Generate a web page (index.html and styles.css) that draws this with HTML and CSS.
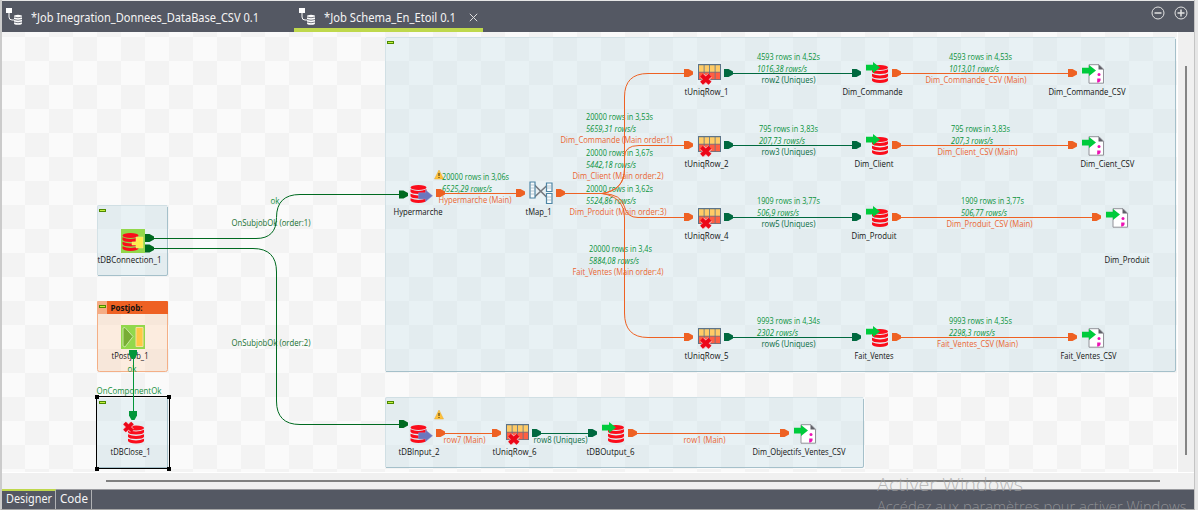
FILE: index.html
```html
<!DOCTYPE html>
<html lang="fr">
<head>
<meta charset="utf-8">
<title>Job Schema_En_Etoil 0.1</title>
<link rel="stylesheet" href="styles.css">
</head>
<body>
<div class="window">
  <header class="tabs">
    <div class="tab first">
      <svg class="job-icon" viewBox="0 0 18 17"><use href="#job"/></svg>
      <svg class="tab-text" width="240" height="24"><text x="0" y="18" textLength="228">*Job Inegration_Donnees_DataBase_CSV 0.1</text></svg>
    </div>
    <div class="tab active">
      <svg class="job-icon" viewBox="0 0 18 17"><use href="#job"/></svg>
      <svg class="tab-text" width="136" height="24"><text x="0" y="18" textLength="132">*Job Schema_En_Etoil 0.1</text></svg>
      <svg class="close" viewBox="0 0 9 9"><path d="M.8.8l7.4 7.4M8.2.8L.8 8.2"/></svg>
    </div>
    <div class="window-buttons">
      <svg viewBox="0 0 14 14"><circle cx="7" cy="7" r="6"/><path d="M3.5 7h7"/></svg>
      <svg viewBox="0 0 14 14"><circle cx="7" cy="7" r="6"/><path d="M3.5 7h7M7 3.5v7"/></svg>
    </div>
  </header>

  <main class="editor">
    <svg class="diagram" width="1176" height="440" viewBox="2 32 1176 440">
      <defs>
        <pattern id="checks" x="1" y="37" width="48" height="48" patternUnits="userSpaceOnUse">
          <path fill="#fafafa" d="M0 0h48v48H0z"/><path fill="#f3f3f3" d="M24 0h24v24H24zM0 24h24v24H0z"/>
        </pattern>
        <g id="job"><path fill="#fff" d="M0 0h6v5H0zM8 8.2q0-1.500 4-1.500t4 1.500v7q0 1.500-4 1.500t-4-1.500z"/><path fill="none" stroke="#fff" d="M3 5v4q0 3 3 3h2"/><path fill="none" stroke="#545863" stroke-width=".8" d="M8 9q4 1.500 8 0M8 11.500q4 1.500 8 0M8 14q4 1.500 8 0"/></g>
        <path id="plug" d="M0-4h4.500l4.500 2.500v3L4.500 4H0z"/>
        <g id="fold"><path fill="#4d8a00" d="M0 0h7v3H0z"/><path fill="#c3f03c" d="M1 1h5v1H1z"/></g>
        <g id="db" fill="#fb0d1b"><ellipse cx="8" cy="2.500" rx="8" ry="2.500"/><path d="M0 4.300q8 3.400 16 0v2.500q-1 2.200-8 2.200T0 6.800zM0 8.800q8 3.400 16 0v2.500q-1 2.200-8 2.200T0 11.300zM0 13.300q8 3.400 16 0v2.300q-1 2.400-8 2.400T0 15.600z"/></g>
        <path id="go" fill="#00cb3c" d="M0 2.700h7V0l7 5.500L7 11V8.500H0z"/>
        <g id="input"><use href="#db" y="1"/><path fill="#6b77bd" stroke="#8b93c8" stroke-width=".5" d="M8 8.800h7V6l7 5.800-7 5.700V15H8z"/></g>
        <g id="output"><use href="#db" x="6.500" y="3"/><use href="#go" x=".5" y="0"/></g>
        <g id="uniq"><path fill="#5d7488" d="M0 1h23v16H0z"/><path fill="#ffcb66" d="M1 2.200h4.700v6.500H1zM6.500 2.200h4.700v6.500H6.500zM12 2.200h4.700v6.500H12zM17.500 2.200H22v6.500h-4.500z"/><path fill="#ff5f42" d="M1 9.500h4.700v6.700H1zM6.500 9.500h4.700v6.700H6.500zM12 9.500h4.700v6.700H12zM17.500 9.500H22v6.700h-4.500z"/><path stroke="#f2b2b4" stroke-width="5.500" d="M4 12.500l8 7.500m0-7.500L4 20"/><path stroke="#ec0718" stroke-width="4" d="M3.500 12.300l8.500 7.900m0-7.900l-8.500 7.900"/></g>
        <g id="file"><path fill="#fff" stroke="#929299" d="M7 .7h10l4.500 4.500v14H7z"/><path fill="#606068" d="M16.500.5l5 5h-5z"/><circle cx="17" cy="10.500" r="1.500" fill="#ed12b5"/><path fill="none" stroke="#ed12b5" stroke-width="2" d="M15.200 15.400h2.400q.2 1.800-2.400 2.300"/><use href="#go" y="1" x="0"/></g>
        <g id="warn"><path fill="#ffc13b" stroke="#e6a92c" stroke-width=".5" d="M4.500 0L9 9H0z"/><path stroke="#69501c" stroke-width="1.300" d="M4.500 3v3M4.500 7v1"/></g>
        <g id="tmap"><path fill="none" stroke="#777b80" stroke-width="1.700" d="M5 4l13 13M5 16L18 4"/><g fill="#f7fbfd" stroke="#4c84a3" stroke-width="1.200"><path d="M.5 1h5v16h-5zM17 2h5.500v8.500H17zM17 12.500h5.500v10H17z"/><path fill="none" stroke="#8ba6b5" stroke-width=".6" d="M.5 4h5m-5 3h5m-5 3h5m-5 3h5M17 5h5m-5 2h5m-5 9h5m-5 3h5"/></g></g>
      </defs>

      <rect x="2" y="32" width="1175" height="440" fill="url(#checks)"/>

      <g class="subjob">
        <rect x="385" y="37" width="791" height="335" rx="2"/>
        <rect x="385" y="397" width="479" height="71" rx="2"/>
        <rect x="97" y="205" width="71" height="71" rx="2"/>
        <rect x="97" y="398" width="71" height="70" rx="1"/>
      </g>
      <path class="subjob-edge" d="M1175.500 39V370q0 1.500-1.500 1.500H386M863.500 399v67q0 1.500-1.500 1.500H386M167.500 207v67q0 1.500-1.500 1.500H98M167.500 399v68.500H98"/>
      <path class="subjob-edge faint" d="M385.500 371V39q0-1.500 1.500-1.500h788M385.500 467v-68q0-1.500 1.500-1.500h476M97.500 275v-68q0-1.500 1.500-1.500h68"/>
      <rect class="postjob" x="97.500" y="301.500" width="70" height="70" rx="2"/>
      <path fill="#ee6123" d="M107 301h60q1 0 1 1v12h-61z"/><path fill="#f5ac84" d="M97 302q0-1 1-1h9v13H97z"/>
      <use href="#fold" x="387" y="41"/><use href="#fold" x="387" y="401"/><use href="#fold" x="99" y="209"/><use href="#fold" x="99" y="305"/><use href="#fold" x="99" y="401"/>
      <rect class="selection" x="96.500" y="396.500" width="73" height="72"/>
      <path d="M95 395h4v4h-4zM167 395h4v4h-4zM95 467h4v4h-4zM167 467h4v4h-4z"/>

      <!-- component icons -->
      <g>
        <rect x="121" y="229" width="24" height="24" fill="#92d84b"/><use href="#db" x="122.500" y="233"/><path fill="#ffed4b" stroke="#ffe792" stroke-width=".5" d="M136 237h7v11h-7v-3h-4v-3h4z"/>
        <rect x="121" y="325" width="24" height="24" fill="#92d84b"/><path fill="#79ad36" stroke="#c7e8a0" d="M123 328l2-.5 8 9-8 10.500-2-1z"/><path fill="#ffc844" stroke="#f5e0a0" d="M136 327.500h7v19h-7z"/>
        <use href="#db" x="128" y="425.500"/><path stroke="#f7bdc0" stroke-width="5" d="M125 423.500l7 7m0-7l-7 7"/><path stroke="#ec0718" stroke-width="3.800" d="M124.500 423l8 8m0-8l-8 8"/>
        <use href="#input" x="410.500" y="184"/><use href="#input" x="410.500" y="424"/>
        <use href="#warn" x="434.500" y="170"/><use href="#warn" x="434.500" y="410"/>
        <use href="#tmap" x="529.500" y="181"/>
        <use href="#uniq" x="698" y="63"/><use href="#uniq" x="698" y="135"/><use href="#uniq" x="698" y="207"/><use href="#uniq" x="698" y="327"/><use href="#uniq" x="506" y="423"/>
        <use href="#output" x="865.500" y="62"/><use href="#output" x="865.500" y="134"/><use href="#output" x="865.500" y="206"/><use href="#output" x="865.500" y="326"/><use href="#output" x="601.500" y="422"/>
        <use href="#file" x="1082" y="64"/><use href="#file" x="1082" y="136"/><use href="#file" x="1106" y="208"/><use href="#file" x="1082" y="328"/><use href="#file" x="794" y="424"/>
      </g>

      <!-- labels -->
      <g class="name">
        <text x="97.500" y="262" textLength="64">tDBConnection_1</text>
        <text x="111.500" y="358" textLength="37">tPostjob_1</text>
        <text x="110.500" y="454" textLength="40">tDBClose_1</text>
        <text class="bold" x="110.500" y="310" textLength="32">Postjob:</text>
        <text x="393.500" y="214" textLength="49">Hypermarche</text>
        <text x="525.500" y="214" textLength="26">tMap_1</text>
        <text x="684.500" y="94" textLength="44">tUniqRow_1</text>
        <text x="684.500" y="166" textLength="44">tUniqRow_2</text>
        <text x="684.500" y="238" textLength="44">tUniqRow_4</text>
        <text x="684.500" y="358" textLength="44">tUniqRow_5</text>
        <text x="842.500" y="94" textLength="60">Dim_Commande</text>
        <text x="854.500" y="166" textLength="39">Dim_Client</text>
        <text x="851.500" y="238" textLength="45">Dim_Produit</text>
        <text x="854.500" y="358" textLength="39">Fait_Ventes</text>
        <text x="1048.500" y="94" textLength="77">Dim_Commande_CSV</text>
        <text x="1080.500" y="166" textLength="54">Dim_Cient_CSV</text>
        <text x="1104.500" y="262" textLength="45">Dim_Produit</text>
        <text x="1060.500" y="358" textLength="56">Fait_Ventes_CSV</text>
        <text x="398.500" y="454" textLength="41">tDBInput_2</text>
        <text x="492.500" y="454" textLength="44">tUniqRow_6</text>
        <text x="586.500" y="454" textLength="48">tDBOutput_6</text>
        <text x="752.500" y="454" textLength="93">Dim_Objectifs_Ventes_CSV</text>
      </g>
      <g class="trigger">
        <text x="270.500" y="203" textLength="9" class="ok">ok</text>
        <text x="231.500" y="225" textLength="79">OnSubjobOk (order:1)</text>
        <text x="231.500" y="345" textLength="79">OnSubjobOk (order:2)</text>
        <text x="127.500" y="371" textLength="9" class="ok">ok</text>
        <text x="96.500" y="393" textLength="65" class="ok">OnComponentOk</text>
      </g>
      <g class="unique">
        <text x="761.500" y="82" textLength="54">row2 (Uniques)</text>
        <text x="761.500" y="154" textLength="54">row3 (Uniques)</text>
        <text x="761.500" y="226" textLength="54">row5 (Uniques)</text>
        <text x="761.500" y="346" textLength="54">row6 (Uniques)</text>
        <text x="533.500" y="442" textLength="54">row8 (Uniques)</text>
      </g>
      <g class="main">
        <text x="438.500" y="202" textLength="73">Hypermarche (Main)</text>
        <text x="560.500" y="142" textLength="112">Dim_Commande (Main order:1)</text>
        <text x="572.500" y="178" textLength="91">Dim_Client (Main order:2)</text>
        <text x="569.500" y="214" textLength="97">Dim_Produit (Main order:3)</text>
        <text x="572.500" y="274" textLength="91">Fait_Ventes (Main order:4)</text>
        <text x="925.500" y="82" textLength="101">Dim_Commande_CSV (Main)</text>
        <text x="937.500" y="154" textLength="80">Dim_Client_CSV (Main)</text>
        <text x="946.500" y="226" textLength="86">Dim_Produit_CSV (Main)</text>
        <text x="937" y="346" textLength="81">Fait_Ventes_CSV (Main)</text>
        <text x="443.500" y="442" textLength="42">row7 (Main)</text>
        <text x="683.500" y="442" textLength="42">row1 (Main)</text>
      </g>
      <g class="stats">
        <text x="442" y="179" textLength="67">20000 rows in 3,06s</text><text class="rate" x="442" y="191" textLength="50">6525,29 rows/s</text>
        <text x="586" y="119" textLength="67">20000 rows in 3,53s</text><text class="rate" x="586" y="131" textLength="50">5659,31 rows/s</text>
        <text x="586" y="155" textLength="67">20000 rows in 3,67s</text><text class="rate" x="586" y="167" textLength="50">5442,18 rows/s</text>
        <text x="586" y="191" textLength="67">20000 rows in 3,62s</text><text class="rate" x="586" y="203" textLength="50">5524,86 rows/s</text>
        <text x="589" y="251" textLength="63">20000 rows in 3,4s</text><text class="rate" x="589" y="263" textLength="50">5884,08 rows/s</text>
        <text x="757" y="59" textLength="63">4593 rows in 4,52s</text><text class="rate" x="757" y="71" textLength="50">1016,38 rows/s</text>
        <text x="759" y="131" textLength="59">795 rows in 3,83s</text><text class="rate" x="759" y="143" textLength="46">207,73 rows/s</text>
        <text x="757" y="203" textLength="63">1909 rows in 3,77s</text><text class="rate" x="757" y="215" textLength="42">506,9 rows/s</text>
        <text x="757" y="323" textLength="63">9993 rows in 4,34s</text><text class="rate" x="757" y="335" textLength="41">2302 rows/s</text>
        <text x="949" y="59" textLength="63">4593 rows in 4,53s</text><text class="rate" x="949" y="71" textLength="50">1013,01 rows/s</text>
        <text x="951" y="131" textLength="59">795 rows in 3,83s</text><text class="rate" x="951" y="143" textLength="42">207,3 rows/s</text>
        <text x="961" y="203" textLength="63">1909 rows in 3,77s</text><text class="rate" x="961" y="215" textLength="46">506,77 rows/s</text>
        <text x="949" y="323" textLength="63">9993 rows in 4,35s</text><text class="rate" x="949" y="335" textLength="46">2298,3 rows/s</text>
      </g>

      <!-- links -->
      <path class="link trigger-link" d="M152 238.500H256Q276.500 238.500 276.500 217.500Q276.500 194.500 300 194.500H400M152 248.500H253Q276.500 248.500 276.500 272V401Q276.500 424.500 300 424.500H400"/>
      <path class="link component-link" d="M133.500 352V414"/>
      <path class="link unique-link" d="M730 73.500H853M730 145.500H853M730 217.500H853M730 337.500H853M540 433.500H589"/>
      <path class="link main-link" d="M443 193.500H518M563 193.500H602M602 193.500Q624.500 190 624.500 169V97Q624.500 73.500 648 73.500H685M602 193.500Q624.500 190 624.500 169V157Q624.500 145.500 639 145.500H685M602 193.500Q622 194 624.500 207Q627 217.500 638 217.500H685M602 193.500Q624.500 197 624.500 218V313Q624.500 337.500 648 337.500H685M898 73.500H1069M898 145.500H1069M898 217.500H1093M898 337.500H1069M443 433.500H493M635 433.500H781"/>
      <g fill="#006a20"><use href="#plug" x="145" y="238"/><use href="#plug" x="145" y="248.500"/><use href="#plug" x="399" y="194.500"/><use href="#plug" x="399" y="424"/></g>
      <g fill="#03963a"><use href="#plug" transform="translate(133 350) rotate(90)"/><use href="#plug" transform="translate(133 411) rotate(90)"/></g>
      <g fill="#00693f"><use href="#plug" x="724" y="73"/><use href="#plug" x="724" y="145"/><use href="#plug" x="724" y="217"/><use href="#plug" x="724" y="337"/><use href="#plug" x="852" y="73"/><use href="#plug" x="852" y="145"/><use href="#plug" x="852" y="217"/><use href="#plug" x="852" y="337"/><use href="#plug" x="532" y="433"/><use href="#plug" x="588" y="433"/></g>
      <g fill="#ee6123"><use href="#plug" x="436" y="193"/><use href="#plug" x="516" y="193"/><use href="#plug" x="556" y="193"/><use href="#plug" x="684" y="73"/><use href="#plug" x="684" y="145"/><use href="#plug" x="684" y="217"/><use href="#plug" x="684" y="337"/><use href="#plug" x="892" y="73"/><use href="#plug" x="892" y="145"/><use href="#plug" x="892" y="217"/><use href="#plug" x="892" y="337"/><use href="#plug" x="1068" y="73"/><use href="#plug" x="1068" y="145"/><use href="#plug" x="1092" y="217"/><use href="#plug" x="1068" y="337"/><use href="#plug" x="436" y="433"/><use href="#plug" x="492" y="433"/><use href="#plug" x="628" y="433"/><use href="#plug" x="780" y="433"/></g>
    </svg>
    <div class="vscroll"><div class="vthumb"></div></div>
  </main>
  <div class="hscroll"><div class="hthumb"></div></div>

  <footer class="views">
    <div class="view current"><svg width="48" height="18"><text x="0" y="13" textLength="46">Designer</text></svg></div>
    <div class="view"><svg width="30" height="18"><text x="0" y="13" textLength="28">Code</text></svg></div>
  </footer>
</div>
<svg class="watermark" width="330" height="37">
  <text class="big" x="2" y="19" textLength="146">Activer Windows</text>
  <text class="small" x="2" y="40" textLength="313">Accédez aux paramètres pour activer Windows.</text>
</svg>
<script src="labels.js"></script>
</body>
</html>
```

FILE: labels.js
```js
// Condense the glyphs, not only the gaps, of every label with a fixed length.
document.querySelectorAll('text[textLength]').forEach(function (label) {
  label.setAttribute('lengthAdjust', 'spacingAndGlyphs');
});
```

FILE: styles.css
```css
* { box-sizing: border-box; }
body { margin: 0; width: 1198px; height: 510px; overflow: hidden; background: #e6e6e6; font-family: "Open Sans", "Noto Sans", sans-serif; }
svg { display: block; flex: none; }
.window { display: flex; flex-direction: column; width: 1195px; height: 510px; padding-top: 1px; border-left: 2px solid #cbcbcb; border-right: 1px solid #c4c4c4; border-bottom: 1px solid #a5a5a5; }

.tabs { display: flex; height: 31px; flex: none; background: #545863; }
.tab { display: flex; align-items: flex-start; height: 31px; padding-left: 4px; }
.tab.first { width: 292px; }
.tab.active { width: 189px; padding-left: 5px; border-bottom: 4px solid #bfd84c; }
.job-icon { width: 18px; height: 17px; margin-top: 7px; }
.tab-text { margin: 3px 0 0 7px; overflow: visible; }
.tab-text text { font-family: "Noto Sans", sans-serif; font-size: 12px; fill: #f4f4f4; }
.close { width: 9px; height: 9px; margin: 12px 0 0 9px; fill: none; stroke: #dedede; }
.window-buttons { display: flex; gap: 9px; margin: 5px 6px 0 auto; }
.window-buttons svg { width: 14px; height: 14px; fill: none; stroke: #e2e2e2; stroke-width: 1; }
.window-buttons path { stroke-width: 1.5; }

.editor { display: flex; height: 440px; flex: none; background: #f0f0f0; }
.diagram { background: #fff; }
.vscroll { width: 15px; padding: 34px 0 0 7px; }
.vthumb { width: 2px; height: 389px; background: #858585; }
.hscroll { height: 18px; flex: none; padding: 8px 0 0 104px; background: #f0f0f0; border-top: 1px solid #fff; border-bottom: 1px solid #9a9b9f; }
.hthumb { width: 1054px; height: 2px; margin-top: -1px; background: #808080; }

.views { display: flex; flex: 1; background: #545863; }
.view { display: flex; width: 36px; padding-left: 4px; border-right: 1px solid #b0b1b4; }
.view.current { width: 54px; border-top: 2px solid #bfd84c; margin-top: -1px; }
.view svg { overflow: visible; }
.view.current svg { margin-top: -1px; }
.view text { font-family: "Noto Sans", sans-serif; font-size: 12px; fill: #f5f5f5; }

.diagram text { font-family: "Open Sans", "Noto Sans", sans-serif; font-size: 8.6px; transform: translateY(.5px); }
.name { fill: #111; }
.diagram .bold { font-size: 8px; font-weight: 700; }
.trigger { fill: #16702f; }
.trigger .ok { fill: #15903c; }
.unique { fill: #086b43; }
.main { fill: #ea6531; }
.stats { fill: #08923a; }
.rate { font-style: italic; }

.subjob rect { fill: #bcdce5; fill-opacity: .28; }
.subjob-edge { fill: none; stroke: #a5c0ca; }
.faint { stroke-opacity: .3; }
.postjob { fill: #ffd0ac; fill-opacity: .35; stroke: #f4af86; }
.selection { fill: none; stroke: #000; }
.link { fill: none; stroke-width: 1; }
.trigger-link { stroke: #006a20; }
.component-link { stroke: #03963a; }
.unique-link { stroke: #00693f; }
.main-link { stroke: #ee6123; }

/* activation notice floats over the bottom right corner */
.watermark { position: absolute; left: 875px; top: 472px; pointer-events: none; }
.watermark text { fill: #a3a3a3; fill-opacity: .75; }
.big { font-size: 19px; font-weight: 300; }
.small { font-size: 14px; font-weight: 300; }
```
